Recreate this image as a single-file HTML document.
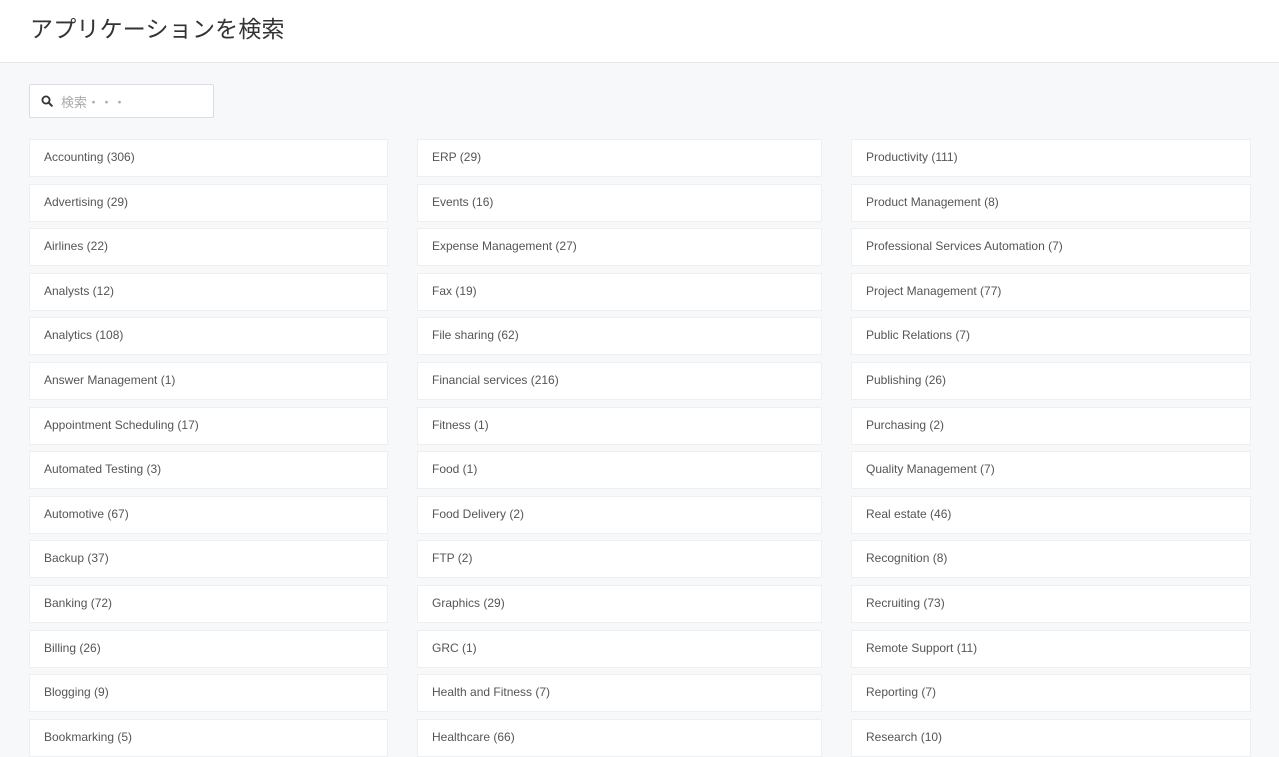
<!DOCTYPE html>
<html><head><meta charset="utf-8"><style>
body{margin:0;width:1279px;height:738px;overflow:hidden;background:#f7f8fa;font-family:"Liberation Sans","Noto Sans CJK JP",sans-serif;}
.hdr{height:62px;background:#fff;border-bottom:1px solid #e6e7ea;position:relative}
.hdr h1{position:absolute;left:30px;top:14px;margin:0;font-weight:400;font-size:23px;color:#333;line-height:30px;letter-spacing:0.2px}
.search{position:absolute;left:29px;top:84px;width:183px;height:32px;background:#fff;border:1px solid #dcdde0;border-radius:2px}
.search svg{position:absolute;left:11px;top:10px}
.search span{position:absolute;left:31px;top:7px;font-size:13px;color:#aaa}
.item{position:absolute;height:38px;box-sizing:border-box;background:#fff;border:1px solid #eeeff1;font-size:12px;color:#555;line-height:35px;padding-left:14px;white-space:nowrap}
</style></head><body>
<div class="hdr"><h1>アプリケーションを検索</h1></div>
<div class="search"><svg width="12" height="12" viewBox="0 0 12 12"><circle cx="5" cy="5" r="3.6" fill="none" stroke="#333" stroke-width="1.8"/><path d="M7.6 7.6L10.8 10.8" stroke="#333" stroke-width="2" stroke-linecap="round"/></svg><span>検索・・・</span></div>
<div id="c"></div>
<script>
var cols=[[29,359,["Accounting (306)","Advertising (29)","Airlines (22)","Analysts (12)","Analytics (108)","Answer Management (1)","Appointment Scheduling (17)","Automated Testing (3)","Automotive (67)","Backup (37)","Banking (72)","Billing (26)","Blogging (9)","Bookmarking (5)"]],
[417,405,["ERP (29)","Events (16)","Expense Management (27)","Fax (19)","File sharing (62)","Financial services (216)","Fitness (1)","Food (1)","Food Delivery (2)","FTP (2)","Graphics (29)","GRC (1)","Health and Fitness (7)","Healthcare (66)"]],
[851,400,["Productivity (111)","Product Management (8)","Professional Services Automation (7)","Project Management (77)","Public Relations (7)","Publishing (26)","Purchasing (2)","Quality Management (7)","Real estate (46)","Recognition (8)","Recruiting (73)","Remote Support (11)","Reporting (7)","Research (10)"]]];
var h='';cols.forEach(function(c){c[2].forEach(function(t,i){h+='<div class="item" style="left:'+c[0]+'px;top:'+Math.round(139+i*44.6)+'px;width:'+c[1]+'px">'+t+'</div>';});});
document.getElementById('c').innerHTML=h;
</script>
</body></html>
